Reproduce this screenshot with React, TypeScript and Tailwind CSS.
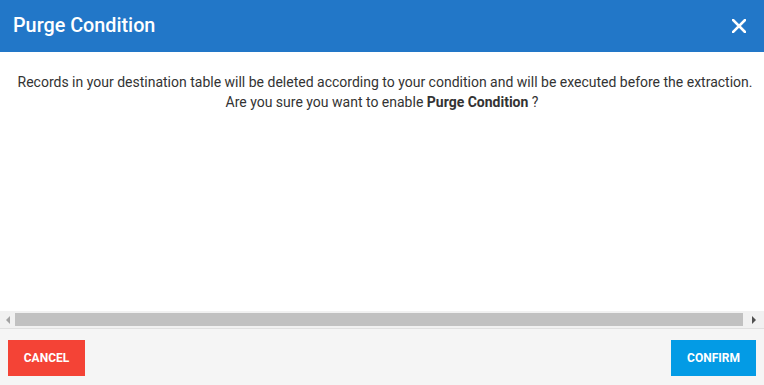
import React from "react";

export default function App() {
  return (
    <div
      className="w-[764px] h-[385px] flex flex-col bg-white overflow-hidden"
      style={{ fontFamily: "Roboto, 'Liberation Sans', sans-serif" }}
    >
      <div className="h-[52px] shrink-0 bg-[#2277c8] flex items-center justify-between pl-[13px] pr-[18px]">
        <span className="text-white text-[19.8px] font-medium leading-none">Purge Condition</span>
        <svg width="14" height="14" viewBox="0 0 14 14">
          <path d="M1 1 L13 13 M13 1 L1 13" stroke="#fff" strokeWidth="2.6" strokeLinecap="square" />
        </svg>
      </div>
      <div className="flex-1 flex flex-col">
        <div className="flex-1 pt-[20px] pl-[14px] pr-[8px] text-center text-[14px] leading-[20px] text-[#333]">
          <p>Records in your destination table will be deleted according to your condition and will be executed before the extraction.</p>
          <p className="pr-[6px]">
            Are you sure you want to enable <b className="font-bold">Purge Condition</b> ?
          </p>
        </div>
        <div className="h-[17px] shrink-0 bg-[#f1f1f1] flex items-center">
          <div className="w-[15px] flex items-center justify-center">
            <div className="w-0 h-0 border-y-[4px] border-y-transparent border-r-[4px] border-r-[#a3a3a3]" />
          </div>
          <div className="flex-1 h-[13px] bg-[#c1c1c1]" />
          <div className="w-[21px] flex items-center justify-center">
            <div className="w-0 h-0 border-y-[4px] border-y-transparent border-l-[4px] border-l-[#505050]" />
          </div>
        </div>
      </div>
      <div className="h-[57px] shrink-0 bg-[#f5f5f5] border-t border-[#e0e0e0] flex items-start justify-between px-2 pt-[11px]">
        <button className="h-[36px] w-[77px] bg-[#f44336] text-white text-[12px] font-bold uppercase">Cancel</button>
        <button className="h-[36px] w-[85px] bg-[#039be5] text-white text-[12px] font-bold uppercase">Confirm</button>
      </div>
    </div>
  );
}
